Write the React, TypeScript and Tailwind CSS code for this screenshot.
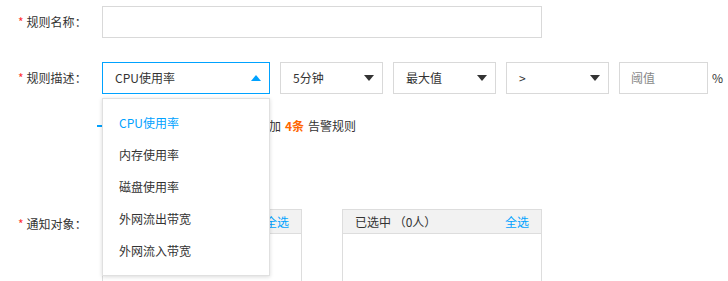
const font = { fontFamily: '"Microsoft YaHei", "Noto Sans CJK SC", sans-serif' };

function Label({ text }: { text: string }) {
  return (
    <div className="w-[102px] shrink-0 pl-[18px] text-[12px] text-[#333]">
      <span className="mr-[3px] text-[#ff3333]">*</span>
      {text}：
    </div>
  );
}

function Caret({ up, color }: { up?: boolean; color: string }) {
  return (
    <svg width="10" height="6" viewBox="0 0 10 6" className="shrink-0">
      <path d={up ? "M0 6 L5 0 L10 6 Z" : "M0 0 L10 0 L5 6 Z"} fill={color} />
    </svg>
  );
}

function Select({ value, w, open }: { value: string; w: string; open?: boolean }) {
  return (
    <div
      className={`flex h-[32px] items-center justify-between border pl-[12px] pr-[8px] text-[12px] text-[#333] ${w} ${
        open ? "border-[#00a2ff]" : "border-[#d9d9d9]"
      }`}
    >
      <span>{value}</span>
      <Caret up={open} color={open ? "#00a2ff" : "#333"} />
    </div>
  );
}

const options = ["CPU使用率", "内存使用率", "磁盘使用率", "外网流出带宽", "外网流入带宽"];

function Transfer({ title }: { title?: string }) {
  return (
    <div className="h-[80px] w-[200px] border border-[#dddddd]">
      <div className="flex h-[24px] items-center justify-between border-b border-[#dddddd] bg-[#f2f2f2] px-[12px] text-[12px]">
        <span className="text-[#333]">{title}</span>
        <span className="text-[#00a2ff]">全选</span>
      </div>
    </div>
  );
}

export default function App() {
  return (
    <div className="relative h-[281px] w-[728px] overflow-hidden bg-white" style={font}>
      <div className="flex items-center pt-[6px]">
        <Label text="规则名称" />
        <div className="h-[32px] w-[440px] border border-[#d9d9d9]" />
      </div>

      <div className="mt-[24px] flex items-center">
        <Label text="规则描述" />
        <div className="flex items-center gap-[10px]">
          <Select value="CPU使用率" w="w-[168px]" open />
          <Select value="5分钟" w="w-[103px]" />
          <Select value="最大值" w="w-[103px]" />
          <Select value=">" w="w-[103px]" />
          <div className="flex h-[32px] w-[89px] items-center border border-[#d9d9d9] pl-[11px] text-[12px] text-[#888]">
            阈值
          </div>
        </div>
        <span className="ml-[4px] text-[12px] text-[#333]">%</span>
      </div>

      <div className="mt-[24px] flex h-[16px] items-center pl-[97px] text-[12px] text-[#333]">
        <span className="h-[2px] w-[10px] bg-[#00a2ff]" />
        <span className="ml-[162px]">加</span>
        <span className="mx-[4px] font-bold text-[#ff6600]">4条</span>
        <span>告警规则</span>
      </div>

      <div className="mt-[75px] flex items-start">
        <div className="flex h-[30px] items-center">
          <Label text="通知对象" />
        </div>
        <div className="flex gap-[40px]">
          <Transfer />
          <Transfer title="已选中 （0人）" />
        </div>
      </div>

      <div className="absolute left-[102px] top-[98px] w-[168px] border border-[#e0e0e0] bg-white py-[8px] shadow-[0_1px_4px_rgba(0,0,0,0.15)]">
        {options.map((o, i) => (
          <div
            key={o}
            className={`flex h-[32px] items-center pl-[16px] text-[12px] ${i === 0 ? "text-[#00a2ff]" : "text-[#333]"}`}
          >
            {o}
          </div>
        ))}
      </div>
    </div>
  );
}
